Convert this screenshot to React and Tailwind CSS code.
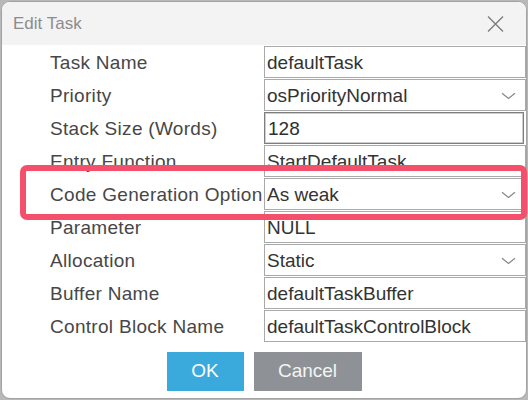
import React from "react";

const rows = [
  { label: "Task Name", value: "defaultTask" },
  { label: "Priority", value: "osPriorityNormal", select: true },
  { label: "Stack Size (Words)", value: "128", focus: true },
  { label: "Entry Function", value: "StartDefaultTask" },
  { label: "Code Generation Option", value: "As weak", select: true },
  { label: "Parameter", value: "NULL" },
  { label: "Allocation", value: "Static", select: true },
  { label: "Buffer Name", value: "defaultTaskBuffer" },
  { label: "Control Block Name", value: "defaultTaskControlBlock" },
];

function Chevron() {
  return (
    <svg width="15" height="8" viewBox="0 0 15 8" className="shrink-0">
      <path d="M1 1.2 L7.5 6.5 L14 1.2" fill="none" stroke="#8a8a8a" strokeWidth="1.3" />
    </svg>
  );
}

export default function App() {
  const font = { fontFamily: '"Liberation Sans", Arial, sans-serif' };
  return (
    <div className="relative w-[528px] h-[400px] bg-[#b8b8b8] p-px" style={font}>
      <div className="h-full w-full rounded-[9px] border border-[#a3a3a3] bg-white overflow-hidden flex flex-col">
        <div className="h-[43px] shrink-0 bg-[#f3f3f3] flex items-center justify-between pl-[11px] pr-[22px]">
          <span className="text-[17px] text-[#8c8c8c]">Edit Task</span>
          <svg width="17" height="16" viewBox="0 0 17 16">
            <path d="M1 0.5 L16 15.5 M16 0.5 L1 15.5" stroke="#7a7a7a" strokeWidth="1.3" fill="none" />
          </svg>
        </div>
        <div className="grid grid-cols-[262px_262px] pt-px">
          {rows.map((r) => (
            <React.Fragment key={r.label}>
              <div className="h-[33px] flex items-center pt-[2px] pl-[48px] text-[19px] tracking-[0.3px] text-[#474747] whitespace-nowrap overflow-hidden">
                {r.label}
              </div>
              <div className="h-[33px]">
                <div
                  className={
                    r.focus
                      ? "h-[32px] w-[260px] border border-[#7d7d7d] shadow-[inset_0_0_0_1px_#cfcfcf] flex items-center pt-[2px] pl-[3px] text-[19px] text-[#2e2e2e]"
                      : "h-[32px] w-[262px] border border-[#a9a9a9] flex items-center justify-between pt-[2px] pl-[2px] pr-[9px] text-[19px] text-[#333333]"
                  }
                >
                  <span className="whitespace-nowrap">{r.value}</span>
                  {r.select && <Chevron />}
                </div>
              </div>
            </React.Fragment>
          ))}
        </div>
        <div className="flex justify-center gap-[10px] mt-[9px]">
          <div className="w-[77px] h-[39px] bg-[#3aa9dc] flex items-center justify-center text-[19px] text-white">OK</div>
          <div className="w-[108px] h-[39px] bg-[#8e9297] flex items-center justify-center text-[19px] text-[#f4f4f4]">Cancel</div>
        </div>
      </div>
      <div className="absolute left-[20px] top-[165px] w-[507px] h-[55px] border-[6px] border-[#f4506b] rounded-[7px]" />
    </div>
  );
}
